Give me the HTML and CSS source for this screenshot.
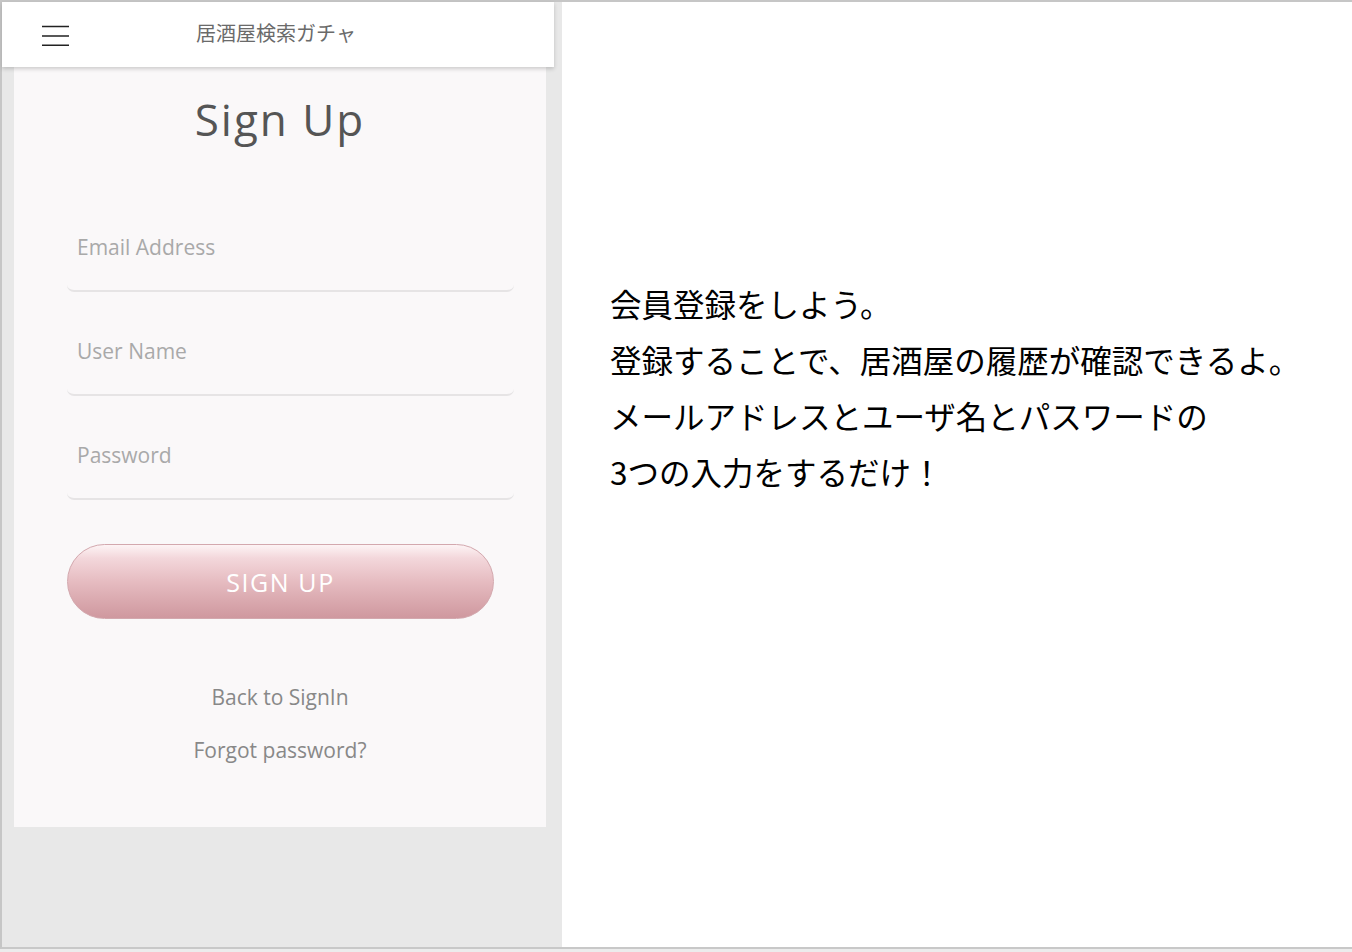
FILE: index.html
```html
<!DOCTYPE html>
<html lang="ja">
<head>
<meta charset="utf-8">
<title>Sign Up</title>
<link rel="stylesheet" href="styles.css">
</head>
<body>
<div class="frame">
  <section class="phone">
    <header class="appbar">
      <button class="menu" type="button" aria-label="menu">
        <svg width="28" height="22" viewBox="0 0 28 22">
          <path d="M0 2.5H27M0 12H27M0 21.3H27" stroke="#222" stroke-width="1.6" fill="none"/>
        </svg>
      </button>
      <div class="apptitle">居酒屋検索ガチャ</div>
      <div></div>
    </header>
    <main class="card">
      <h1 class="heading">Sign Up</h1>
      <form class="form">
        <input class="field" type="email" placeholder="Email Address">
        <input class="field" type="text" placeholder="User Name">
        <input class="field" type="password" placeholder="Password">
        <button class="submit" type="button">SIGN UP</button>
      </form>
      <a class="link first">Back to SignIn</a>
      <a class="link">Forgot password?</a>
    </main>
  </section>
  <section class="info">
    <p>会員登録をしよう。</p>
    <p>登録することで、居酒屋の履歴が確認できるよ。</p>
    <p>メールアドレスとユーザ名とパスワードの</p>
    <p>3つの入力をするだけ！</p>
  </section>
</div>
</body>
</html>
```
FILE: styles.css
```css
html, body {
  margin: 0;
  padding: 0;
}
body {
  background: #ececec;
  width: 1352px;
  height: 952px;
  overflow: hidden;
}
.frame {
  display: flex;
  box-sizing: border-box;
  width: 1352px;
  height: 949px;
  border-top: 2px solid #c6c6c6;
  border-left: 2px solid #c6c6c6;
  border-bottom: 2px solid #c8c8c8;
}
.phone {
  width: 560px;
  flex: none;
  background: #e8e8e8;
  display: flex;
  flex-direction: column;
}
.appbar {
  position: relative;
  z-index: 1;
  width: 552px;
  height: 65px;
  box-sizing: border-box;
  background: #fff;
  box-shadow: 0 2px 4px rgba(0, 0, 0, 0.18);
  display: grid;
  grid-template-columns: 1fr auto 1fr;
  align-items: center;
  padding: 0 44px 0 40px;
}
.menu {
  justify-self: start;
  border: 0;
  background: none;
  padding: 0;
  width: 28px;
  height: 22px;
  margin-top: 1px;
  display: block;
}
.menu svg {
  display: block;
}
.apptitle {
  font-family: "Noto Sans CJK JP", sans-serif;
  font-size: 20px;
  color: #6a6a6a;
  line-height: 28px;
  margin-top: -3px;
}
.card {
  width: 532px;
  height: 760px;
  margin-left: 12px;
  background: #faf8f9;
  box-sizing: border-box;
  padding-top: 22px;
  font-family: "Open Sans", sans-serif;
  display: flex;
  flex-direction: column;
  align-items: center;
}
.heading {
  margin: 0;
  font-weight: 400;
  font-size: 44px;
  line-height: 60px;
  letter-spacing: 2px;
  color: #555;
}
.form {
  align-self: flex-start;
  margin: 55px 0 0 53px;
  display: flex;
  flex-direction: column;
  gap: 16px;
}
.field {
  display: block;
  box-sizing: border-box;
  width: 447px;
  height: 88px;
  padding: 0 10px;
  margin: 0;
  border: 0;
  border-bottom: 2px solid #e6e4e5;
  border-radius: 0 0 7px 7px;
  background: transparent;
  font-family: "Open Sans", sans-serif;
  font-size: 21px;
  color: #444;
  outline: none;
}
.field::placeholder {
  color: #a9a9a9;
}
.submit {
  margin-top: 28px;
  width: 427px;
  height: 75px;
  border: 1px solid #d3a8ae;
  border-radius: 38px;
  background: linear-gradient(to bottom, #fdf4f5 0%, #f3d7db 18%, #e6bcc1 50%, #d8a6ac 80%, #cf989f 100%);
  color: #fff;
  font-family: "Open Sans", sans-serif;
  font-size: 25px;
  letter-spacing: 1.6px;
  padding: 0;
}
.link {
  display: block;
  font-size: 21px;
  line-height: 28px;
  color: #888;
}
.link.first {
  margin-top: 64px;
  margin-bottom: 25px;
}
.info {
  flex: 1;
  background: #fff;
  padding: 273px 0 0 48px;
  font-family: "Noto Sans CJK JP", sans-serif;
  font-size: 31.5px;
  line-height: 56px;
  color: #000;
}
.info p {
  margin: 0;
}
```
